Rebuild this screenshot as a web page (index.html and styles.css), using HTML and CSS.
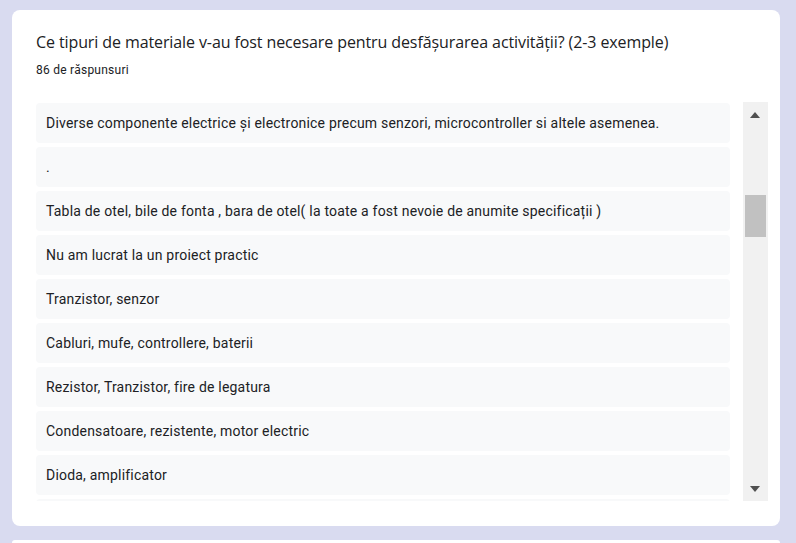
FILE: index.html
```html
<!DOCTYPE html>
<html lang="ro">
<head>
<meta charset="utf-8">
<title>Răspunsuri</title>
<link rel="stylesheet" href="styles.css">
</head>
<body>
<main class="page">
  <section class="card">
    <h2 class="title">Ce tipuri de materiale v-au fost necesare pentru desfășurarea activității? (2-3 exemple)</h2>
    <div class="count">86 de răspunsuri</div>
    <div class="answers">
      <div class="list">
        <div class="item">Diverse componente electrice și electronice precum senzori, microcontroller si altele asemenea.</div>
        <div class="item">.</div>
        <div class="item">Tabla de otel, bile de fonta , bara de otel( la toate a fost nevoie de anumite specificații )</div>
        <div class="item">Nu am lucrat la un proiect practic</div>
        <div class="item">Tranzistor, senzor</div>
        <div class="item">Cabluri, mufe, controllere, baterii</div>
        <div class="item">Rezistor, Tranzistor, fire de legatura</div>
        <div class="item">Condensatoare, rezistente, motor electric</div>
        <div class="item">Dioda, amplificator</div>
        <div class="item"></div>
      </div>
      <div class="scrollbar">
        <div class="arrow arrow-up"></div>
        <div class="track"><div class="thumb"></div></div>
        <div class="arrow arrow-down"></div>
      </div>
    </div>
  </section>
  <section class="card card-next"></section>
</main>
</body>
</html>
```
FILE: styles.css
```css
* { box-sizing: border-box; }
html, body { margin: 0; padding: 0; }
body {
  background: #d9dbf0;
  font-family: Roboto, "Noto Sans", Arial, sans-serif;
  color: #202124;
  overflow: hidden;
  height: 543px;
}
.page {
  padding: 10px 16px 0 12px;
  display: flex;
  flex-direction: column;
  gap: 14px;
}
.card {
  background: #fff;
  border-radius: 8px;
  padding: 20px 12px 25px 24px;
}
.card-next {
  height: 3px;
  padding: 0;
  border-radius: 8px 8px 0 0;
}
.title {
  margin: 0;
  font-family: "Open Sans", Roboto, sans-serif;
  font-weight: 400;
  font-size: 16px;
  line-height: 24px;
  letter-spacing: -0.1px;
  color: #202124;
}
.count {
  margin-top: 8px;
  font-size: 12px;
  line-height: 16px;
  letter-spacing: 0.25px;
  color: #202124;
}
.answers {
  margin-top: 24px;
  display: flex;
  height: 399px;
}
.list {
  flex: 1;
  overflow: hidden;
  padding-top: 1px;
  padding-right: 13px;
  display: flex;
  flex-direction: column;
  gap: 4px;
}
.item {
  flex: none;
  height: 40px;
  line-height: 40px;
  padding: 0 10px;
  background: #f8f9fa;
  border-radius: 4px;
  font-size: 14px;
  letter-spacing: 0.2px;
  white-space: nowrap;
  overflow: hidden;
}
.scrollbar {
  width: 25px;
  background: #f1f1f1;
  display: flex;
  flex-direction: column;
  align-items: center;
}
.arrow {
  height: 25px;
  width: 25px;
  position: relative;
}
.arrow::after {
  content: "";
  position: absolute;
  left: 7px;
  border-left: 5.5px solid transparent;
  border-right: 5.5px solid transparent;
}
.arrow-up::after {
  top: 10px;
  border-bottom: 6px solid #505050;
}
.arrow-down::after {
  top: 10px;
  border-top: 6px solid #505050;
}
.track {
  flex: 1;
  width: 100%;
  padding: 0 2px;
}
.thumb {
  margin-top: 68px;
  height: 42px;
  background: #c1c1c1;
}
```
